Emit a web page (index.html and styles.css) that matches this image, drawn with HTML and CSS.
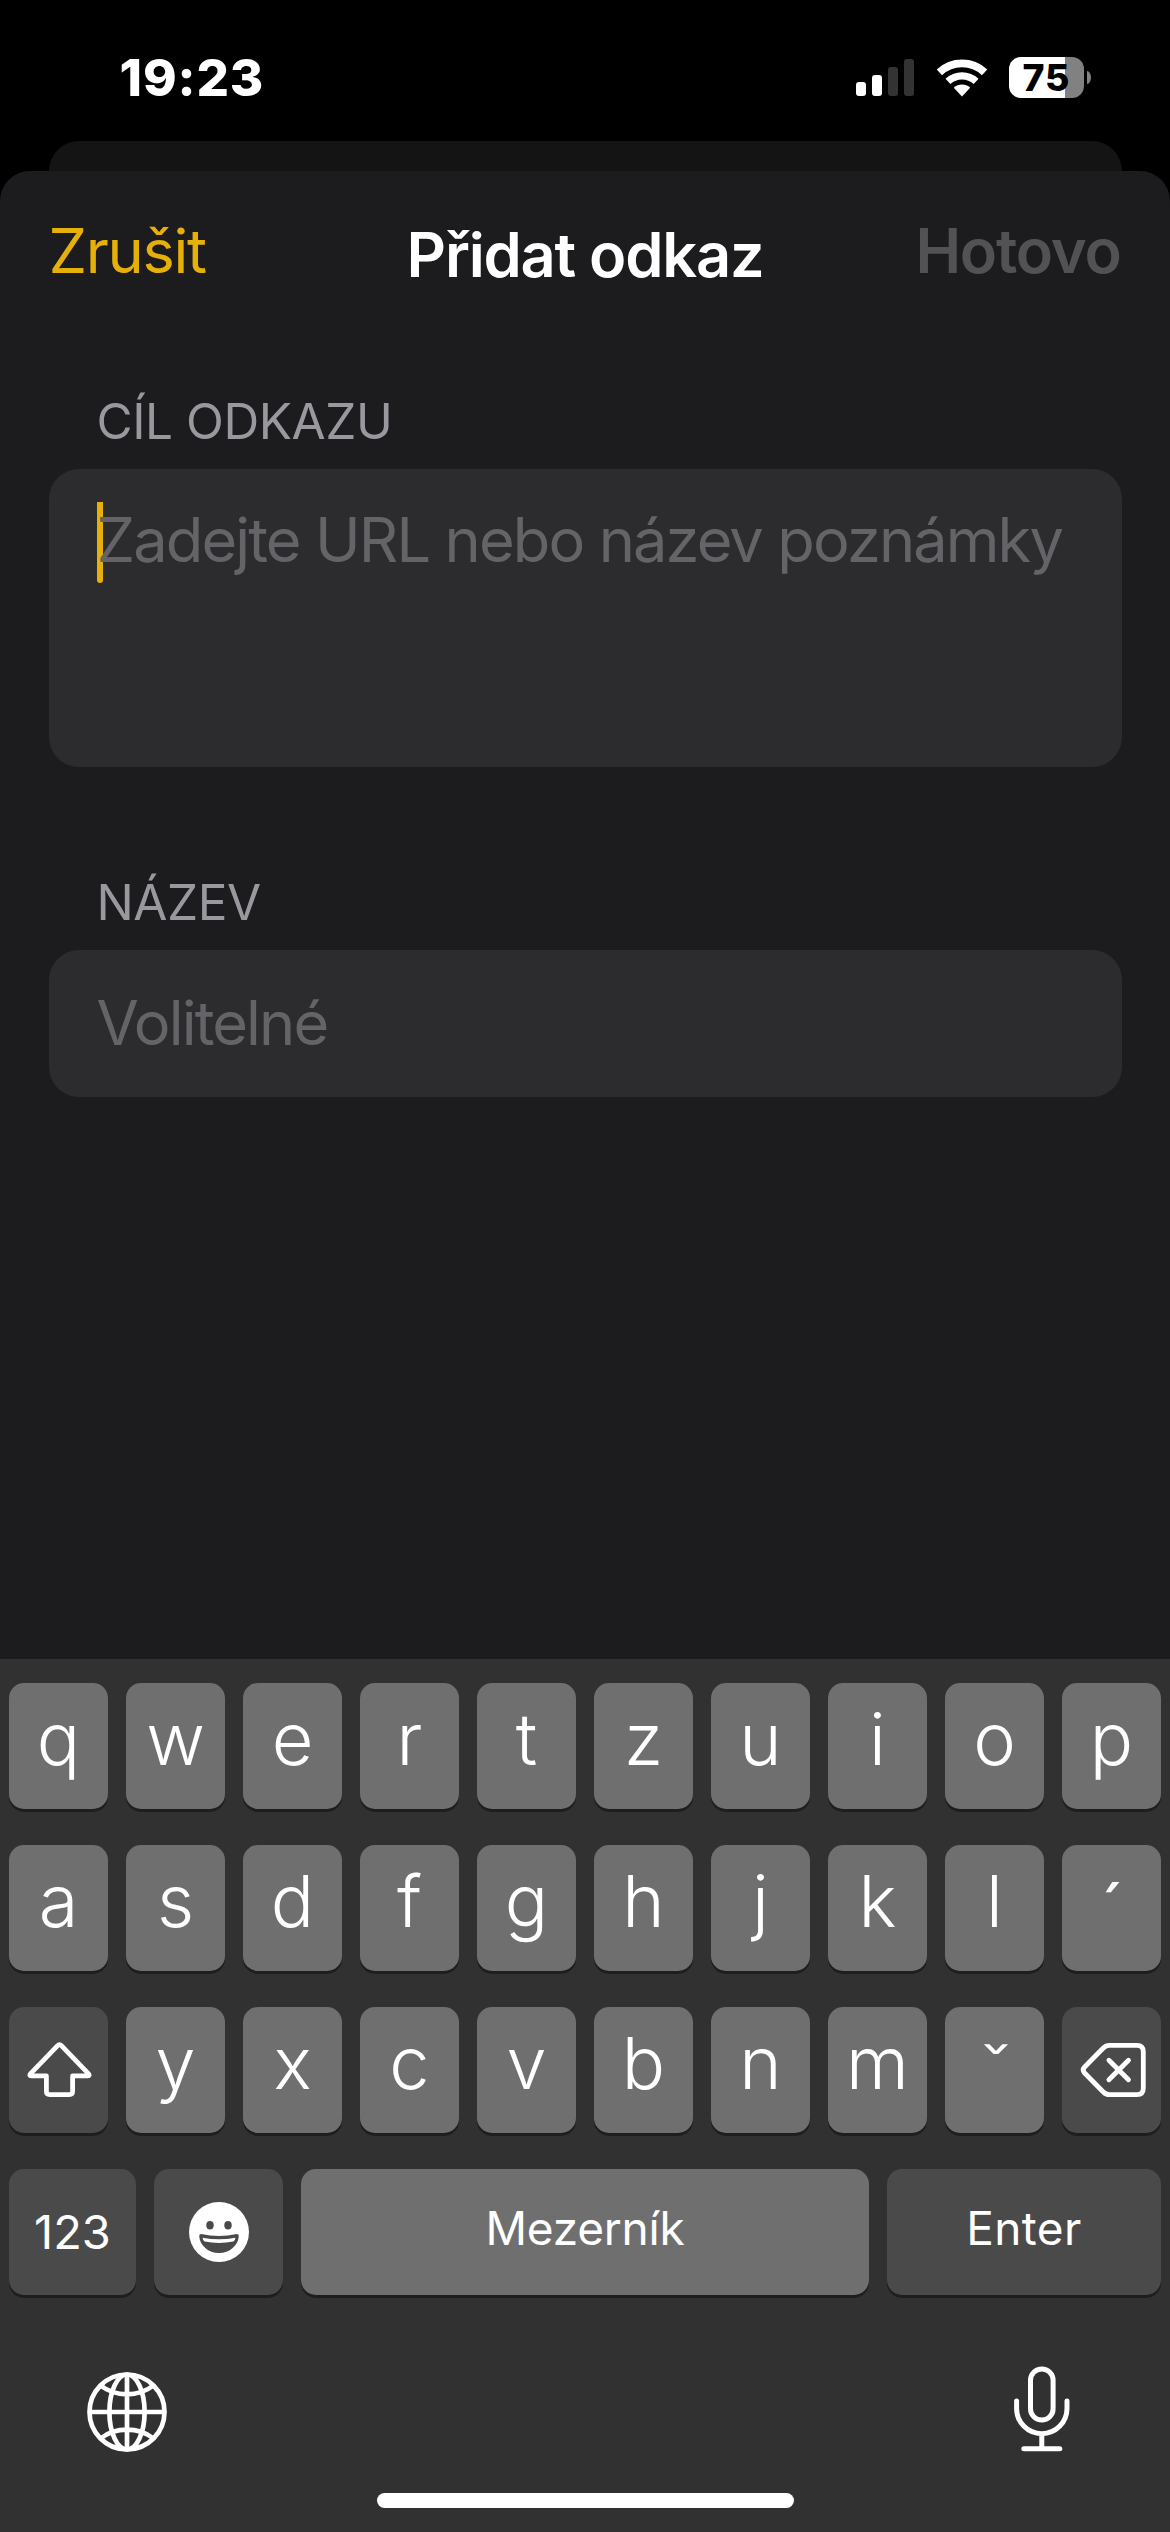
FILE: index.html
```html
<!DOCTYPE html>
<html lang="cs">
<head>
<meta charset="utf-8">
<title>Přidat odkaz</title>
<link rel="stylesheet" href="styles.css">
</head>
<body>
<header class="status">
  <span class="time">19:23</span>
  <div class="status-icons">
    <svg class="signal" width="58" height="37" viewBox="0 0 58 37" fill="#fff"><rect y="23" width="10" height="14" rx="3"/><rect x="16" y="16" width="10" height="21" rx="3"/><rect x="32" y="8" width="10" height="29" rx="3" fill="#333"/><rect x="48" width="10" height="37" rx="3" fill="#333"/></svg>
    <svg class="wifi" width="52" height="38" viewBox="-26 -37.5 52 38" fill="none" stroke="#fff"><path d="M-22.6-24.2A33.1 33.1 0 0 1 22.6-24.2" stroke-width="7.8"/><path d="M-14.1-15.1A20.6 20.6 0 0 1 14.1-15.1" stroke-width="7.2"/><path d="M0 0L-8.2-8.8A12 12 0 0 1 8.2-8.8Z" fill="#fff" stroke="none"/></svg>
    <div class="battery"><span>75</span></div>
    <i class="battery-cap"></i>
  </div>
</header>
<div class="back-card"></div>
<main class="sheet">
  <nav class="nav">
    <span class="cancel">Zrušit</span>
    <h1 class="title">Přidat odkaz</h1>
    <span class="done">Hotovo</span>
  </nav>
  <section class="group">
    <h2 class="label">CÍL ODKAZU</h2>
    <div class="field field-tall"><i class="caret"></i><span class="hint">Zadejte URL nebo název poznámky</span></div>
  </section>
  <section class="group group-name">
    <h2 class="label">NÁZEV</h2>
    <div class="field"><span class="hint">Volitelné</span></div>
  </section>
</main>
<footer class="keyboard">
  <div class="keys">
    <div class="row"><b class="key">q</b><b class="key">w</b><b class="key">e</b><b class="key">r</b><b class="key">t</b><b class="key">z</b><b class="key">u</b><b class="key">i</b><b class="key">o</b><b class="key">p</b></div>
    <div class="row"><b class="key">a</b><b class="key">s</b><b class="key">d</b><b class="key">f</b><b class="key">g</b><b class="key">h</b><b class="key">j</b><b class="key">k</b><b class="key">l</b><b class="key accent"><span class="mark acute">´</span></b></div>
    <div class="row">
      <b class="key dark icon"><svg width="99" height="126" viewBox="0 0 99 126" fill="none" stroke="#fff" stroke-width="4.8" stroke-linejoin="round"><path d="M48.6 38.6Q50.5 36.6 52.4 38.6L79.4 66.6Q81.4 68.9 78.6 68.9H63.6V84.3Q63.6 87.6 60.3 87.6H40.7Q37.4 87.6 37.4 84.3V68.9H22.4Q19.6 68.9 21.6 66.6Z"/></svg></b><b class="key">y</b><b class="key">x</b><b class="key">c</b><b class="key">v</b><b class="key">b</b><b class="key">n</b><b class="key">m</b><b class="key accent"><span class="mark">ˇ</span></b>
      <b class="key dark icon"><svg width="99" height="126" viewBox="0 0 99 126" fill="none" stroke="#fff" stroke-width="4.8" stroke-linejoin="round" stroke-linecap="round"><path d="M47.5 38.4H75Q81.3 38.4 81.3 44.7V81.3Q81.3 87.6 75 87.6H47.5Q43.7 87.6 41.3 85L22.6 66Q19.8 63 22.6 60L41.3 41Q43.7 38.4 47.5 38.4ZM46.9 53.2L66.5 72.8M66.5 53.2L46.9 72.8"/></svg></b>
    </div>
    <div class="row bottom">
      <b class="key dark small numbers">123</b>
      <b class="key dark icon"><svg width="60" height="60" viewBox="0 0 60 60"><circle cx="30" cy="30" r="30" fill="#fff"/><g fill="#4a4a4a"><ellipse cx="21" cy="23.3" rx="3.7" ry="4.2"/><ellipse cx="39" cy="23.3" rx="3.7" ry="4.2"/><path d="M12.2 32Q30 36 47.8 32Q49.8 32 49.8 34C49.3 43.5 40.5 51 30 51S10.7 43.5 10.2 34Q10.2 32 12.2 32Z"/></g><path d="M13.6 35.7Q30 39 46.4 35.7Q46.3 38.8 44.3 39.6Q30 42.5 15.7 39.6Q13.7 38.8 13.6 35.7Z" fill="#fff"/></svg></b>
      <b class="key small raised space">Mezerník</b>
      <b class="key dark small raised enter">Enter</b>
    </div>
  </div>
  <div class="tools">
    <svg class="globe" width="80" height="80" viewBox="-40 -40 80 80" fill="none" stroke="#fff" stroke-width="4.7"><circle r="37.5"/><ellipse rx="17.6" ry="37.5"/><path d="M0-37.5V37.5M-37.5 0H37.5M-26.5-26.5Q-15-17.7 0-17.7T26.5-26.5M-26.5 26.5Q-15 17.7 0 17.7T26.5 26.5"/></svg>
    <svg width="56" height="86" viewBox="0 0 56 86" fill="none" stroke="#fff" stroke-width="5" stroke-linecap="round"><rect x="16.5" y="3" width="22.6" height="51" rx="11.3"/><path d="M2.6 35V42.5A25.2 25.2 0 0 0 53 42.5V35M27.8 68V82M9.8 82.7H45.8"/></svg>
  </div>
  <div class="home"></div>
</footer>
</body>
</html>
```
FILE: styles.css
```css
* { box-sizing: border-box; }
body { margin: 0; width: 1170px; background: #000; color: #fff; font-family: Inter, "Liberation Sans", sans-serif; }
svg { display: block; flex: none; }
h1, h2 { margin: 0; }

.status { height: 141px; padding: 14px 79px 0 119.5px; display: flex; align-items: center; justify-content: space-between; }
.time { font-size: 51px; font-weight: 800; letter-spacing: 0.9px; }
.status-icons { display: flex; align-items: center; }
.wifi { margin: 0 21px 0 22px; }
.battery { width: 75px; height: 41px; border-radius: 12px; background: linear-gradient(90deg, #fff 56px, #818181 56px); color: #000; text-align: center; font-size: 37.5px; font-weight: 800; letter-spacing: 1px; line-height: 42px; }
.battery-cap { width: 4px; height: 13px; margin-left: 3px; border-radius: 0 4px 4px 0 / 0 6.5px 6.5px 0; background: #818181; }

.back-card { height: 30px; margin: 0 48.5px; border-radius: 30px 30px 0 0; background: #141414; }
.sheet { height: 1488px; padding: 0 48.5px; border-radius: 30px 30px 0 0; background: #1c1c1e; }
.nav { height: 160px; display: grid; grid-template-columns: 1fr auto 1fr; align-items: center; font-size: 61.3px; letter-spacing: -1.22px; white-space: nowrap; }
.cancel { color: #e6b00a; letter-spacing: -1.31px; }
.title { font-size: inherit; font-weight: 600; padding-top: 8px; }
.done { padding-right: 1px; color: #525254; font-weight: 600; text-align: right; }

.group { padding-top: 60px; }
.group-name { padding-top: 105px; }
.label { padding-left: 48px; margin-bottom: 18px; color: #98989f; font-size: 49.5px; font-weight: 400; letter-spacing: -0.45px; line-height: 60px; }
.field { height: 147px; padding: 0 48px; display: flex; align-items: center; border-radius: 30px; background: #2c2c2e; font-size: 61.3px; letter-spacing: -1.87px; white-space: nowrap; }
.field-tall { height: 298px; padding-top: 33px; align-items: flex-start; }
.caret { flex: none; width: 6px; height: 81px; margin-right: -6px; border-radius: 0 0 3px 3px; background: #e6b00a; }
.hint { color: #646468; line-height: 77px; }

.keyboard { height: 873px; padding: 24px 9px; background: #313131; }
.keys { display: grid; gap: 36px; }
.row { display: grid; grid-template-columns: repeat(10, 99px); gap: 18px; }
.bottom { grid-template-columns: 127px 129px 568px 274px; }
.key { height: 126px; padding-bottom: 16px; display: flex; align-items: center; justify-content: center; border-radius: 15px; background: #6f6f6f; box-shadow: 0 3px #1e1e1e; font-size: 72px; font-weight: 350; }
.dark { background: #4a4a4a; }
.small { font-size: 46px; font-weight: 400; }
.small, .icon { padding-bottom: 0; }
.raised { padding-bottom: 8px; }
.accent { padding: 4px 0 0 2px; }
.mark { transform: scaleX(1.1); }
.acute { transform: scaleX(1.3); }
.numbers { padding-bottom: 2px; font-size: 47px; }
.space { letter-spacing: -0.23px; }
.enter { letter-spacing: 0.4px; }
.tools { height: 86px; margin-top: 71px; padding: 0 91px 0 78px; display: flex; align-items: center; justify-content: space-between; }
.globe { margin-top: 6px; }
.home { width: 417px; height: 15px; margin: 41px auto 0; border-radius: 8px; background: #fff; }
```
